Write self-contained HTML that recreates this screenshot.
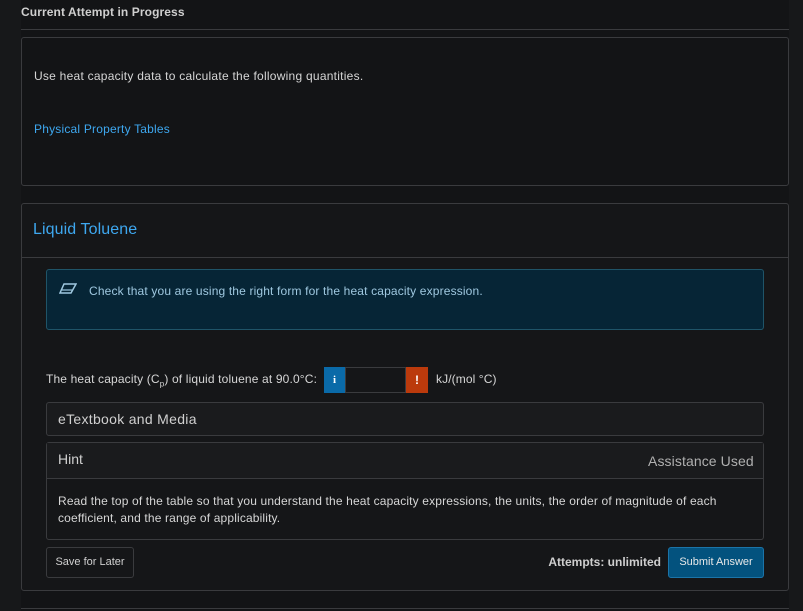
<!DOCTYPE html>
<html><head><style>
*{box-sizing:border-box;margin:0;padding:0}
body{width:803px;height:611px;background:#17181a;font-family:"Liberation Sans",sans-serif;color:#d4d4d4;position:relative;overflow:hidden;font-size:12px}
.main{position:absolute;left:21px;top:0;width:768px;height:611px;background:#131416}
.abs{position:absolute;white-space:nowrap}
.box{position:absolute;border:1px solid #3a3b3e;border-radius:3px}
</style></head><body>
<div class="main"></div>
<div class="abs" style="left:21px;top:5px;font-size:12px;font-weight:bold;color:#cfcfcf;letter-spacing:0.1px">Current Attempt in Progress</div>
<div class="abs" style="left:21px;top:29px;width:768px;height:1px;background:#3a3b3e"></div>
<div class="box" style="left:21px;top:37px;width:768px;height:149px;background:#131416"></div>
<div class="abs" style="left:34px;top:69px;font-size:12px;letter-spacing:0.25px;color:#d6d6d6">Use heat capacity data to calculate the following quantities.</div>
<div class="abs" style="left:34px;top:122px;font-size:12px;letter-spacing:0.2px;color:#3ea8f0">Physical Property Tables</div>
<div class="box" style="left:21px;top:203px;width:768px;height:388px;background:#151618"></div>
<div class="abs" style="left:33px;top:221px;font-size:16px;color:#3ea8f0;letter-spacing:0.1px">Liquid Toluene</div>
<div class="abs" style="left:22px;top:257px;width:766px;height:1px;background:#3a3b3e"></div>
<div class="box" style="left:46px;top:269px;width:718px;height:61px;background:#062536;border-color:#1f5468"></div>
<svg class="abs" style="left:59px;top:283px" width="18" height="12" viewBox="0 0 18 12"><path d="M5 1h12l-5 9H1z" fill="none" stroke="#9fc8e0" stroke-width="1.5"/><path d="M3 7h10" stroke="#9fc8e0" stroke-width="1.2"/></svg>
<div class="abs" style="left:89px;top:284px;font-size:12px;letter-spacing:0.15px;color:#9fc8e0">Check that you are using the right form for the heat capacity expression.</div>
<div class="abs" style="left:46px;top:372px;font-size:12px;letter-spacing:0.15px;color:#d6d6d6">The heat capacity (C<sub style="font-size:8px">p</sub>) of liquid toluene at 90.0°C:</div>
<div class="abs" style="left:324px;top:367px;width:21px;height:26px;background:#0a6aa8;color:#fff;font-weight:bold;font-size:11px;text-align:center;line-height:26px;font-family:'Liberation Serif',serif">i</div>
<div class="abs" style="left:345px;top:367px;width:61px;height:26px;background:#151618;border:1px solid #3a3b3e"></div>
<div class="abs" style="left:406px;top:367px;width:22px;height:26px;background:#bb3a0c;color:#fff;font-weight:bold;font-size:12px;text-align:center;line-height:26px">!</div>
<div class="abs" style="left:436px;top:372px;font-size:12px;letter-spacing:0.1px;color:#d6d6d6">kJ/(mol °C)</div>
<div class="box" style="left:46px;top:402px;width:718px;height:34px;background:#1a1b1d"></div>
<div class="abs" style="left:58px;top:411px;font-size:14px;color:#d0d0d0;letter-spacing:0.3px">eTextbook and Media</div>
<div class="box" style="left:46px;top:442px;width:718px;height:98px;background:#151618"></div>
<div class="abs" style="left:47px;top:443px;width:716px;height:36px;background:#1a1b1d;border-bottom:1px solid #3a3b3e"></div>
<div class="abs" style="left:58px;top:451px;font-size:14px;color:#d0d0d0">Hint</div>
<div class="abs" style="left:648px;top:453px;font-size:14px;color:#b0b0b0;letter-spacing:0.1px">Assistance Used</div>
<div class="abs" style="left:58px;top:493px;width:680px;white-space:normal;font-size:12px;line-height:17px;letter-spacing:0.15px;color:#d6d6d6">Read the top of the table so that you understand the heat capacity expressions, the units, the order of magnitude of each coefficient, and the range of applicability.</div>
<div class="box" style="left:46px;top:547px;width:88px;height:31px;color:#d0d0d0;font-size:11px;text-align:center;line-height:29px">Save for Later</div>
<div class="abs" style="left:520px;width:141px;text-align:right;top:555px;font-size:12px;font-weight:bold;color:#cfcfcf;letter-spacing:0px">Attempts: unlimited</div>
<div class="abs" style="left:668px;top:547px;width:96px;height:31px;background:#03527e;border:1px solid #1b74a8;border-radius:3px;color:#e8e8e8;font-size:11px;text-align:center;line-height:29px">Submit Answer</div>
<div class="abs" style="left:21px;top:608px;width:768px;height:1px;background:#3a3b3e"></div>
</body></html>
